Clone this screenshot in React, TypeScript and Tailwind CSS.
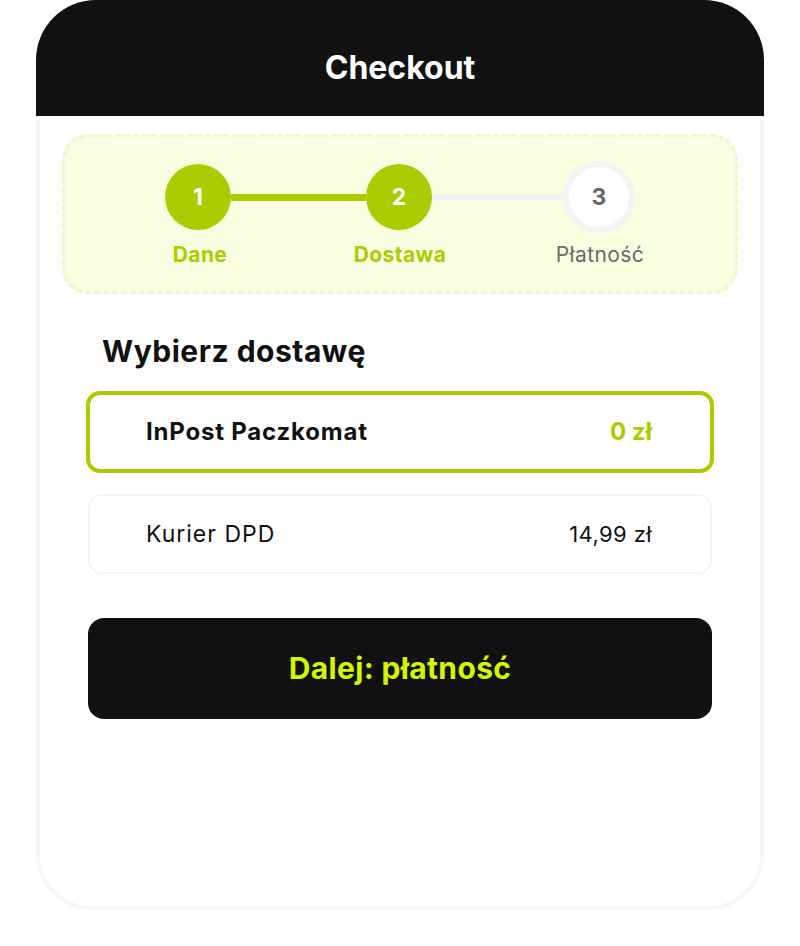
import React from "react";

const steps = [
  { n: "1", label: "Dane", state: "done" },
  { n: "2", label: "Dostawa", state: "active" },
  { n: "3", label: "Płatność", state: "todo" },
];

export default function App() {
  return (
    <div className="min-h-screen bg-white flex justify-center font-['Inter',_'Liberation_Sans',_sans-serif] text-[#111]">
      <div className="w-[728px] rounded-t-[60px] overflow-hidden">
        <header className="h-[116px] bg-[#111111] flex items-center justify-center pt-[20px]">
          <h1 className="text-white text-[32px] font-bold">Checkout</h1>
        </header>

        <div className="h-[794px] border-4 border-t-0 border-[#f6f6f6] rounded-b-[56px] px-[22px] pt-[18px]">
          {/* stepper */}
          <div className="h-[160px] rounded-[26px] border-[3px] border-dashed border-[#eef6d3] bg-[#f8fee0] pt-[24px]">
            <div className="flex items-center justify-center">
              <div className="w-[66px] h-[66px] rounded-full bg-[#aacc00] flex items-center justify-center text-white text-[23px] font-bold">
                1
              </div>
              <div className="w-[135px] h-[7px] bg-[#aacc00]" />
              <div className="w-[66px] h-[66px] rounded-full bg-[#aacc00] flex items-center justify-center text-white text-[23px] font-bold">
                2
              </div>
              <div className="w-[131px] h-[7px] bg-[#f4f4f4]" />
              <div className="w-[72px] h-[72px] rounded-full bg-white border-[6px] border-[#f4f4f4] flex items-center justify-center text-[#666] text-[23px] font-bold">
                3
              </div>
            </div>
            <div className="flex justify-center mt-[6px]">
              {steps.map((s) => (
                <div
                  key={s.n}
                  className={
                    s.state === "todo"
                      ? "w-[200px] text-center text-[21px] tracking-[0.4px] text-[#6b6b6b]"
                      : "w-[200px] text-center text-[21px] tracking-[0.4px] font-bold text-[#aacc00]"
                  }
                >
                  {s.label}
                </div>
              ))}
            </div>
          </div>

          <h2 className="mt-[38px] ml-[40px] text-[30px] font-bold tracking-[0.5px] leading-[38px]">Wybierz dostawę</h2>

          <div className="mt-[21px] mx-[24px] flex flex-col gap-[21px]">
            <div className="h-[82px] rounded-[14px] border-4 border-[#aacc00] flex items-center justify-between pl-[56px] pr-[58px]">
              <span className="text-[24px] font-bold tracking-[0.8px]">InPost Paczkomat</span>
              <span className="text-[24px] font-bold text-[#aacc00]">0 zł</span>
            </div>
            <div className="h-[80px] mx-[2px] rounded-[14px] border-2 border-[#f4f4f4] flex items-center justify-between pl-[56px] pr-[58px]">
              <span className="text-[23px] tracking-[1px]">Kurier DPD</span>
              <span className="text-[22px] tracking-[0.4px]">14,99 zł</span>
            </div>
          </div>

          <button className="mt-[44px] mx-[26px] w-[624px] h-[101px] rounded-[16px] bg-[#111111] text-[#d4f500] text-[30px] font-bold tracking-[0.35px]">
            Dalej: płatność
          </button>
        </div>
      </div>
    </div>
  );
}
